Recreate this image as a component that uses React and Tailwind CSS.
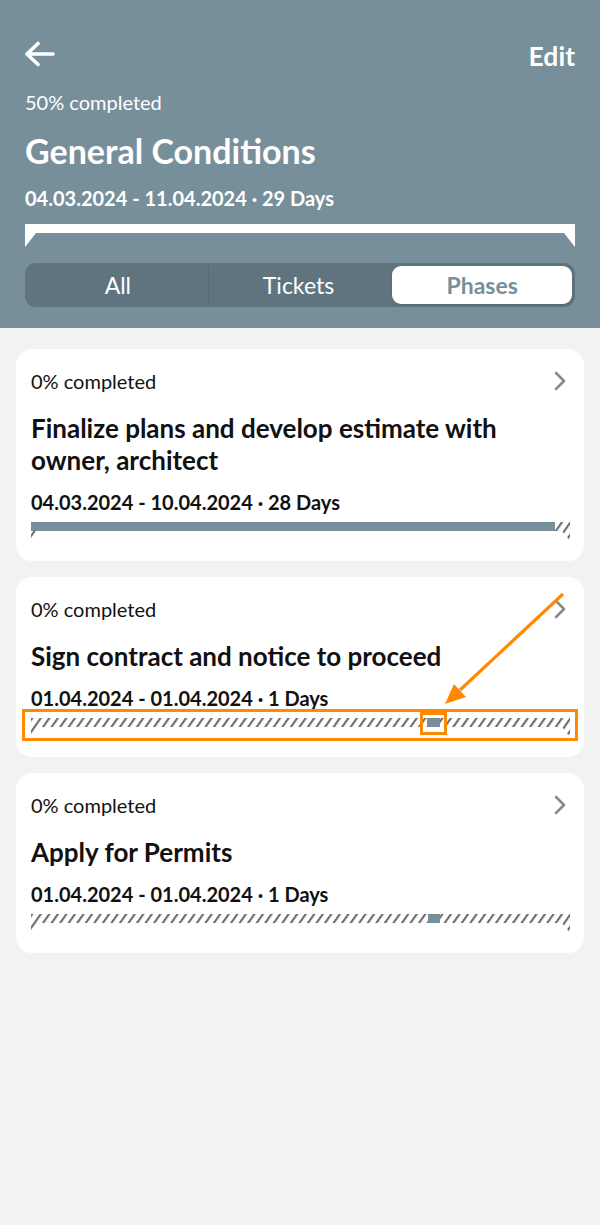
import React from "react";

const phases = [
  {
    title: "Finalize plans and develop estimate with owner, architect",
    dates: "04.03.2024 - 10.04.2024 · 28 Days",
    fill: [0, 524],
  },
  {
    title: "Sign contract and notice to proceed",
    dates: "01.04.2024 - 01.04.2024 · 1 Days",
    fill: [396, 409],
  },
  {
    title: "Apply for Permits",
    dates: "01.04.2024 - 01.04.2024 · 1 Days",
    fill: [397, 409],
  },
];

function GanttBar({ id, fill }) {
  return (
    <svg width="539" height="20" viewBox="0 0 539 20" className="block">
      <defs>
        <pattern
          id={id}
          width="7"
          height="7"
          patternUnits="userSpaceOnUse"
          patternTransform="rotate(35)"
        >
          <line x1="1" y1="-2" x2="1" y2="9" stroke="#6e6e6e" strokeWidth="2.3" />
        </pattern>
      </defs>
      <path d="M0 0 H539 V19 L531 9 H8 L0 19 Z" fill={`url(#${id})`} />
      <rect x={fill[0]} y="0" width={fill[1] - fill[0]} height="9" fill="#778f9a" />
    </svg>
  );
}

function Chevron() {
  return (
    <svg width="14" height="20" viewBox="0 0 14 20" className="block">
      <path
        d="M3 2 L11 10 L3 18"
        fill="none"
        stroke="#8a8a8a"
        strokeWidth="2.6"
        strokeLinecap="round"
        strokeLinejoin="round"
      />
    </svg>
  );
}

function PhaseCard({ phase, idx }) {
  return (
    <div className="rounded-2xl bg-white px-[15px] pt-5 pb-[19px]">
      <div className="flex items-center justify-between">
        <span className="text-[20px] leading-[24px] text-[#111]">0% completed</span>
        <div className="mr-[2px]">
          <Chevron />
        </div>
      </div>
      <h2 className="mt-[19px] text-[26px] leading-[32px] font-bold text-[#111]">
        {phase.title}
      </h2>
      <p className="mt-[14px] text-[20px] leading-[24px] font-bold text-[#111]">
        {phase.dates}
      </p>
      <div className="mt-[8px]">
        <GanttBar id={`hatch-${idx}`} fill={phase.fill} />
      </div>
    </div>
  );
}

export default function App() {
  return (
    <div className="relative min-h-[1225px] w-[600px] bg-[#f2f2f2] font-[Lato,sans-serif]">
      {/* header */}
      <div className="bg-[#778f9a] px-[25px] pt-[39px] pb-[21px] text-white">
        <div className="flex h-[30px] items-center justify-between">
          <svg width="32" height="26" viewBox="0 0 32 26" className="-ml-[1px]">
            <path
              d="M3 13 H29 M14 2.5 L3 13 L14 23.5"
              fill="none"
              stroke="#fff"
              strokeWidth="3.6"
              strokeLinecap="round"
              strokeLinejoin="round"
            />
          </svg>
          <span className="mt-1 text-[26.5px] leading-[30px] font-bold">Edit</span>
        </div>
        <p className="mt-[21px] text-[20px] leading-[24px]">50% completed</p>
        <h1 className="mt-[17px] text-[34px] leading-[40px] font-bold">General Conditions</h1>
        <p className="mt-[15px] text-[20px] leading-[24px] font-bold">
          04.03.2024 - 11.04.2024 · 29 Days
        </p>
        <svg width="550" height="23" viewBox="0 0 550 23" className="mt-[14px] block">
          <path d="M0 0 H550 V23 L539 9 H11 L0 23 Z" fill="#fff" />
        </svg>
        <div className="mt-4 flex h-[44px] rounded-[11px] bg-[#607480] p-[3px]">
          <div className="flex flex-1 items-center justify-center border-r border-[#566a76] text-[23px]">
            All
          </div>
          <div className="flex flex-1 items-center justify-center text-[23px]">Tickets</div>
          <div className="ml-[4px] flex flex-1 items-center justify-center rounded-[9px] bg-white text-[23px] font-bold text-[#778f9a] shadow-sm">
            Phases
          </div>
        </div>
      </div>

      {/* phases */}
      <div className="flex flex-col gap-[16px] px-4 pt-[21px]">
        {phases.map((p, i) => (
          <PhaseCard key={i} phase={p} idx={i} />
        ))}
      </div>

      {/* annotation overlay */}
      <svg
        width="600"
        height="1225"
        viewBox="0 0 600 1225"
        className="pointer-events-none absolute top-0 left-0"
      >
        <rect x="23.5" y="710.5" width="553" height="29" fill="none" stroke="#ff8a00" strokeWidth="3" />
        <rect x="421.5" y="713.5" width="24" height="20" fill="none" stroke="#ff8a00" strokeWidth="3" />
        <line x1="563" y1="594" x2="460" y2="690" stroke="#ff8a00" strokeWidth="3.2" />
        <polygon points="445,704 466,697 454,684" fill="#ff8a00" />
      </svg>
    </div>
  );
}
